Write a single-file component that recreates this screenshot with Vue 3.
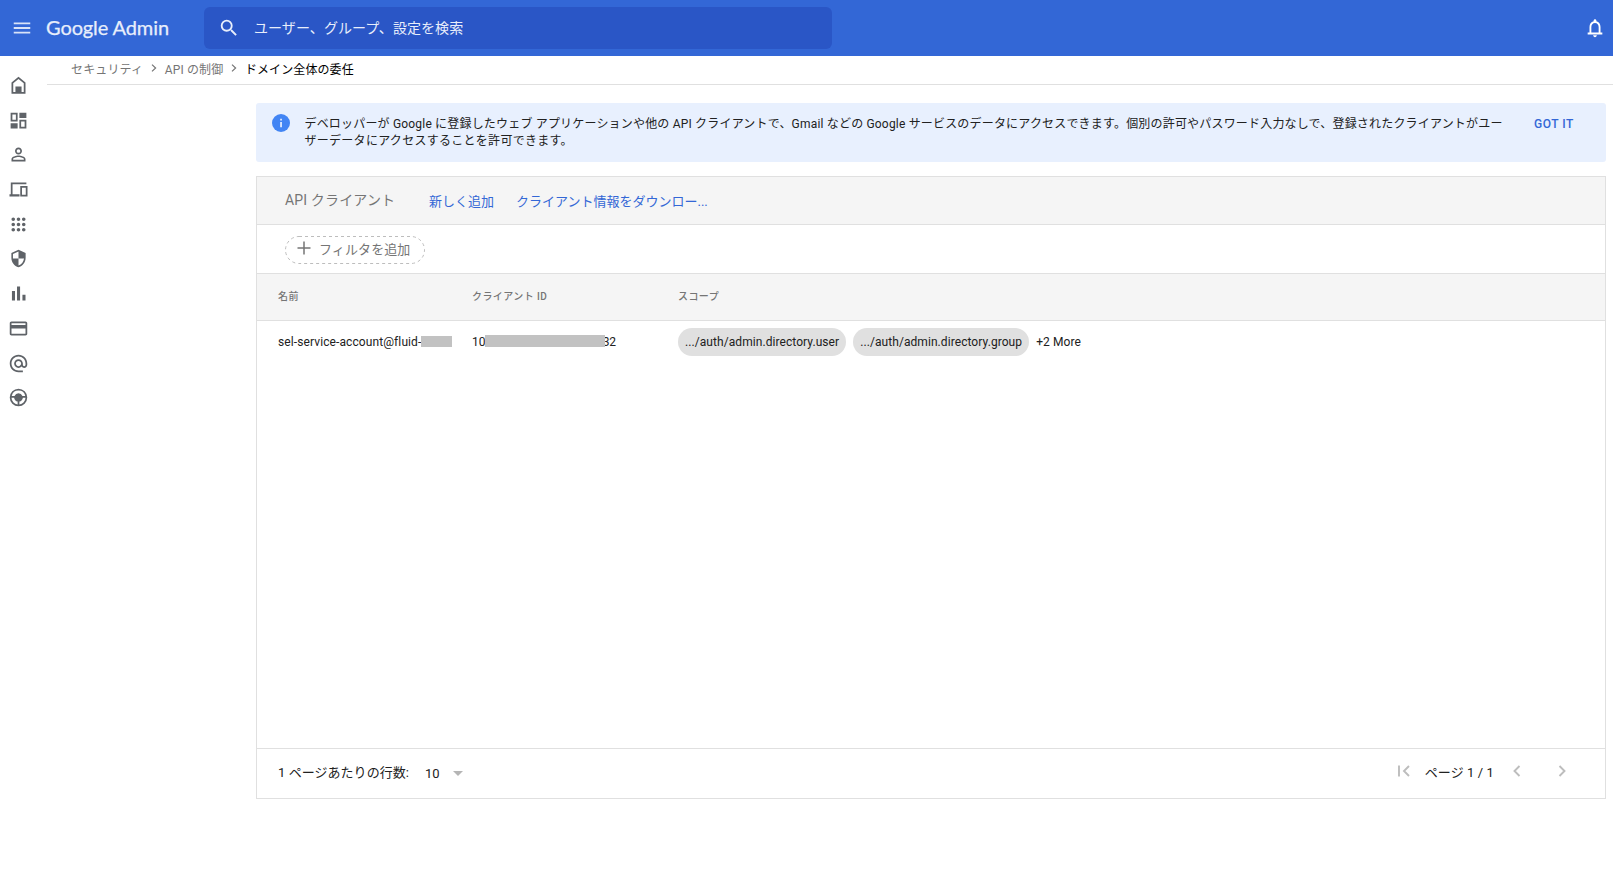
<script setup>
const nav = [
  { name: 'home', d: 'M12 2 4 8.500V21.500h16V8.500L12 2zM6 9.500l6-4.900 6 4.900v10h-2.500V13h-7v6.500H6v-10z' },
  { name: 'dashboard', d: 'M3 3h8v10H3V3zm2 2v6h4V5H5zm8-2h8v6h-8V3zM3 15h8v6H3v-6zm10-4h8v10h-8V11zm2 2v6h4v-6h-4z' },
  { name: 'users', d: 'M12 5.9a2.1 2.1 0 1 1 0 4.2 2.1 2.1 0 0 1 0-4.2m0 9c2.97 0 6.1 1.46 6.1 2.1v1.1H5.9V17c0-.64 3.13-2.1 6.1-2.1M12 4C9.79 4 8 5.79 8 8s1.79 4 4 4 4-1.79 4-4-1.79-4-4-4zm0 9c-2.67 0-8 1.34-8 4v3h16v-3c0-2.66-5.33-4-8-4z' },
  { name: 'devices', d: 'M5.200 6H21V4H3.200v13.500H1.700V20h11.500v-2.500h-8V6zM22.300 8H14v12h8.300V8zm-2 10H16v-8h4.300v8z' },
  { name: 'apps', d: 'M6 8c1.1 0 2-.9 2-2s-.9-2-2-2-2 .9-2 2 .9 2 2 2zm6 12c1.1 0 2-.9 2-2s-.9-2-2-2-2 .9-2 2 .9 2 2 2zm-6 0c1.1 0 2-.9 2-2s-.9-2-2-2-2 .9-2 2 .9 2 2 2zm0-6c1.1 0 2-.9 2-2s-.9-2-2-2-2 .9-2 2 .9 2 2 2zm6 0c1.1 0 2-.9 2-2s-.9-2-2-2-2 .9-2 2 .9 2 2 2zm4-8c0 1.1.9 2 2 2s2-.9 2-2-.9-2-2-2-2 .9-2 2zm-4 2c1.1 0 2-.9 2-2s-.9-2-2-2-2 .9-2 2 .9 2 2 2zm6 6c1.1 0 2-.9 2-2s-.9-2-2-2-2 .9-2 2 .9 2 2 2zm0 6c1.1 0 2-.9 2-2s-.9-2-2-2-2 .9-2 2 .9 2 2 2z' },
  { name: 'security', small: true, d: 'M12 1 3 5v6c0 5.55 3.84 10.74 9 12 5.16-1.26 9-6.45 9-12V5l-9-4zm0 10.99h7c-.53 4.12-3.28 7.79-7 8.94V12H5V6.3l7-3.11v8.8z' },
  { name: 'reports', d: 'M4.500 9H8v11H4.500zM16.500 13.500H20V20h-3.500zM10.300 4h3.500v16h-3.500z' },
  { name: 'billing', d: 'M20 4H4c-1.11 0-1.99.89-1.99 2L2 18c0 1.11.89 2 2 2h16c1.11 0 2-.89 2-2V6c0-1.11-.89-2-2-2zm0 14H4v-6h16v6zm0-10H4V6h16v2z' },
  { name: 'account', d: 'M12 2C6.48 2 2 6.48 2 12s4.48 10 10 10h5v-2h-5c-4.34 0-8-3.66-8-8s3.66-8 8-8 8 3.66 8 8v1.43c0 .79-.71 1.57-1.5 1.57s-1.5-.78-1.5-1.57V12c0-2.76-2.24-5-5-5s-5 2.24-5 5 2.24 5 5 5c1.38 0 2.64-.56 3.54-1.47.65.89 1.77 1.47 2.96 1.47 1.97 0 3.5-1.6 3.5-3.57V12c0-5.52-4.48-10-10-10zm0 13c-1.66 0-3-1.34-3-3s1.34-3 3-3 3 1.34 3 3-1.34 3-3 3z' },
  { name: 'roles', d: 'M12 2a10 10 0 1 0 0 20 10 10 0 0 0 0-20zm0 2a8 8 0 0 1 7.750 6.200h-3.200a5 5 0 0 0-9.100 0h-3.200A8 8 0 0 1 12 4zM4 12.200h3c.2 2.200 1.800 4 4 4.500v3.200a8 8 0 0 1-7-7.700zM13 19.900v-3.200c2.200-.5 3.800-2.300 4-4.500h3a8 8 0 0 1-7 7.700z' },
]
const crumbs = ['セキュリティ', 'API の制御', 'ドメイン全体の委任']
const scopes = ['.../auth/admin.directory.user', '.../auth/admin.directory.group']
</script>

<template>
  <div class="page">
    <header class="topbar">
      <svg class="menu" viewBox="0 0 24 24"><path d="M3 18h18v-2H3v2zm0-5h18v-2H3v2zm0-7v2h18V6H3z" /></svg>
      <div class="brand">Google Admin</div>
      <div class="search">
        <svg viewBox="0 0 24 24"><path d="M15.500 14h-.79l-.28-.27A6.470 6.470 0 0 0 16 9.500 6.500 6.500 0 1 0 9.500 16c1.610 0 3.090-.59 4.230-1.570l.27.28v.79l5 4.990L20.490 19l-4.990-5zm-6 0C7.010 14 5 11.990 5 9.500S7.010 5 9.500 5 14 7.010 14 9.500 11.990 14 9.500 14z" /></svg>
        <span>ユーザー、グループ、設定を検索</span>
      </div>
      <svg class="bell" viewBox="0 0 24 24"><path d="M18 17v-6c0-3.070-1.630-5.640-4.500-6.320V4c0-.83-.67-1.500-1.500-1.500s-1.500.67-1.500 1.500v.68C7.640 5.360 6 7.920 6 11v6H4v2h16v-2h-2zm-2 0H8v-6c0-2.480 1.510-4.500 4-4.500s4 2.020 4 4.500v6zm-4 5c1.100 0 2-.9 2-2h-4c0 1.100.9 2 2 2z" /></svg>
    </header>

    <div class="body">
      <nav class="side">
        <div v-for="i in nav" :key="i.name" class="nav-item">
          <svg viewBox="0 0 24 24" :class="{ small: i.small }"><path :d="i.d" fill-rule="evenodd" /></svg>
        </div>
      </nav>
      <main class="content">
        <div class="crumbs">
          <template v-for="(c, n) in crumbs" :key="c">
            <svg v-if="n" viewBox="0 0 6 8"><path d="M1 .6 4.600 4 1 7.400" /></svg>
            <span :class="{ current: n === 2 }">{{ c }}</span>
          </template>
        </div>

        <section class="notice">
          <svg viewBox="0 0 18 18"><circle cx="9" cy="9" r="9" fill="#4285f4" /><path d="M8.200 4.700h1.700v1.700H8.200zM8.200 8h1.700v5.200H8.200z" fill="#e8f0fe" /></svg>
          <p><span class="line1">デベロッパーが Google に登録したウェブ アプリケーションや他の API クライアントで、Gmail などの Google サービスのデータにアクセスできます。個別の許可やパスワード入力なしで、登録されたクライアントがユー</span><br />ザーデータにアクセスすることを許可できます。</p>
          <a>GOT IT</a>
        </section>

        <section class="card">
          <div class="toolbar">
            <h1>API クライアント</h1>
            <a class="add">新しく追加</a>
            <a class="download">クライアント情報をダウンロー...</a>
          </div>
          <div class="filters">
            <div class="chip">
              <svg class="outline" viewBox="0 0 140 28"><rect x=".5" y=".5" width="139" height="27" rx="13.500" /></svg>
              <svg class="plus" viewBox="0 0 14 14"><path d="M7 .5v13M.5 7h13" /></svg>
              <span>フィルタを追加</span>
            </div>
          </div>
          <div class="row head">
            <span>名前</span><span>クライアント ID</span><span>スコープ</span>
          </div>
          <div class="row data">
            <div class="cell">sel-service-account@fluid-<i class="mask short"></i></div>
            <div class="cell">10<i class="mask long"></i><span class="tail">32</span></div>
            <div class="cell">
              <span v-for="s in scopes" :key="s" class="scope">{{ s }}</span>
              <span class="more">+2 More</span>
            </div>
          </div>
          <div class="empty"></div>
          <div class="footer">
            <span class="per">1 ページあたりの行数:</span>
            <span class="count">10</span>
            <i class="caret"></i>
            <svg class="first" viewBox="0 0 12 12"><path d="M1 .5v11M11 1 6 6l5 5" /></svg>
            <span class="pager">ページ 1 / 1</span>
            <svg class="prev" viewBox="0 0 8 12"><path d="M6.500 1 1.500 6l5 5" /></svg>
            <svg class="next" viewBox="0 0 8 12"><path d="m1.500 1 5 5-5 5" /></svg>
          </div>
        </section>
      </main>
    </div>
  </div>
</template>

<style>
body { background: #fff; }
</style>

<style scoped>
.page { width: 1613px; height: 882px; overflow: hidden; font-family: Roboto, "Noto Sans CJK JP", sans-serif; font-size: 12px; color: #212121; white-space: nowrap; }
.page * { box-sizing: border-box; }
svg { display: block; flex: none; }
span, a { flex: none; }
.topbar { height: 56px; background: #3367d6; display: flex; align-items: center; color: #e8eefb; }
.menu { width: 22px; height: 22px; margin: -1px 0 0 11px; fill: #d9e3f8; }
.brand { width: 158px; margin: -2px 0 0 13px; font-family: Lato, sans-serif; font-size: 20px; line-height: 28px; letter-spacing: -.1px; -webkit-text-stroke: .25px; }
.search { width: 628px; height: 42px; margin-top: -1px; background: #2a56c6; border-radius: 6px; display: flex; align-items: center; font-size: 14px; letter-spacing: .06px; }
.search svg { width: 22px; height: 22px; margin: 0 14px 0 14px; fill: #e8eefb; }
.search span { padding-bottom: 2px; }
.bell { width: 22px; height: 22px; margin-left: auto; margin-right: 7px; fill: #fff; }
.body { display: flex; height: 826px; }
.side { width: 47px; padding-top: 12.200px; flex: none; }
.nav-item { height: 34.700px; width: 37px; display: flex; align-items: center; justify-content: center; }
.nav-item svg { width: 21px; height: 21px; fill: #5f6368; }
.nav-item svg.small { width: 19px; height: 19px; }
.content { flex: 1; }
.crumbs { height: 29px; border-bottom: 1px solid #e0e0e0; display: flex; align-items: center; padding: 0 0 3px 24px; color: #757575; letter-spacing: .15px; }
.crumbs svg { width: 6px; height: 8px; margin: -2px 7.500px 0 8px; fill: none; stroke: #757575; stroke-width: 1.200; }
.current { color: #000; letter-spacing: .1px; }
.notice { margin: 18px 7px 0 209px; height: 59px; background: #e8f0fe; border-radius: 3px; display: flex; align-items: flex-start; }
.notice svg { width: 18px; height: 18px; margin: 11px 14.500px 0 16px; }
.notice p { margin: 13px 0 0; width: 1229.500px; line-height: 17px; letter-spacing: .28px; }
.line1 { letter-spacing: .185px; }
.notice a { margin-top: 13px; line-height: 17px; font-weight: 500; color: #3367d6; letter-spacing: .5px; }
.card { margin: 14px 7px 0 209px; height: 623px; border: 1px solid #e0e0e0; display: flex; flex-direction: column; }
.toolbar { height: 48px; background: #f5f5f5; border-bottom: 1px solid #e0e0e0; display: flex; align-items: center; padding-left: 28px; font-size: 13px; }
h1 { margin: 0; width: 144px; padding-bottom: 4px; font-size: 14px; font-weight: 400; color: #757575; letter-spacing: .15px; }
.toolbar a { color: #3367d6; }
.add { width: 87px; }
.filters { height: 49px; border-bottom: 1px solid #e0e0e0; display: flex; align-items: center; padding: 2px 0 0 28px; }
.chip { width: 140px; height: 28px; position: relative; display: flex; align-items: center; padding-left: 12px; font-size: 13px; color: #757575; letter-spacing: .1px; }
.chip span { padding-bottom: 4px; }
.outline { position: absolute; left: 0; top: 0; width: 140px; height: 28px; fill: none; stroke: #bdbdbd; stroke-dasharray: 3 3; }
.plus { width: 14px; height: 14px; margin: -4px 8px 0 0; fill: none; stroke: #757575; stroke-width: 1.500; }
.row { display: grid; grid-template-columns: 194px 206px 1fr; padding-left: 21px; align-items: center; }
.head { height: 47px; flex: none; background: #f5f5f5; border-bottom: 1px solid #e0e0e0; font-size: 10px; font-weight: 500; color: #757575; letter-spacing: .42px; padding-bottom: 4px; }
.data { height: 42px; letter-spacing: .1px; }
.cell { display: flex; align-items: center; }
.mask { display: block; background: #c2c2c2; flex: none; position: relative; }
.short { width: 31px; height: 11px; top: -1px; }
.long { width: 120px; height: 12px; top: -1px; margin-left: -.5px; z-index: 1; }
.tail { margin-left: -2.500px; letter-spacing: -.2px; }
.scope { height: 28px; line-height: 28px; border-radius: 14px; background: #e0e0e0; padding: 0 7px; margin-right: 7px; letter-spacing: .07px; }
.empty { flex: 1; }
.footer { height: 50px; border-top: 1px solid #e0e0e0; display: flex; align-items: center; padding: 0 39px 3px 21px; font-size: 13px; }
.per { width: 147px; margin-top: -2px; letter-spacing: .05px; }
.count { margin-top: 2px; }
.caret { border: 5px solid transparent; border-top-color: #b5b5b5; border-bottom: 0; margin: 3px auto 0 13px; }
.footer svg { height: 12px; fill: none; stroke: #bdbdbd; stroke-width: 1.900; margin-top: -2px; }
.first { width: 12px; margin-right: 15px; }
.pager { margin-top: -2px; letter-spacing: .1px; }
.footer .prev { width: 8px; margin-left: 19px; }
.footer .next { width: 8px; margin-left: 37px; }
</style>
